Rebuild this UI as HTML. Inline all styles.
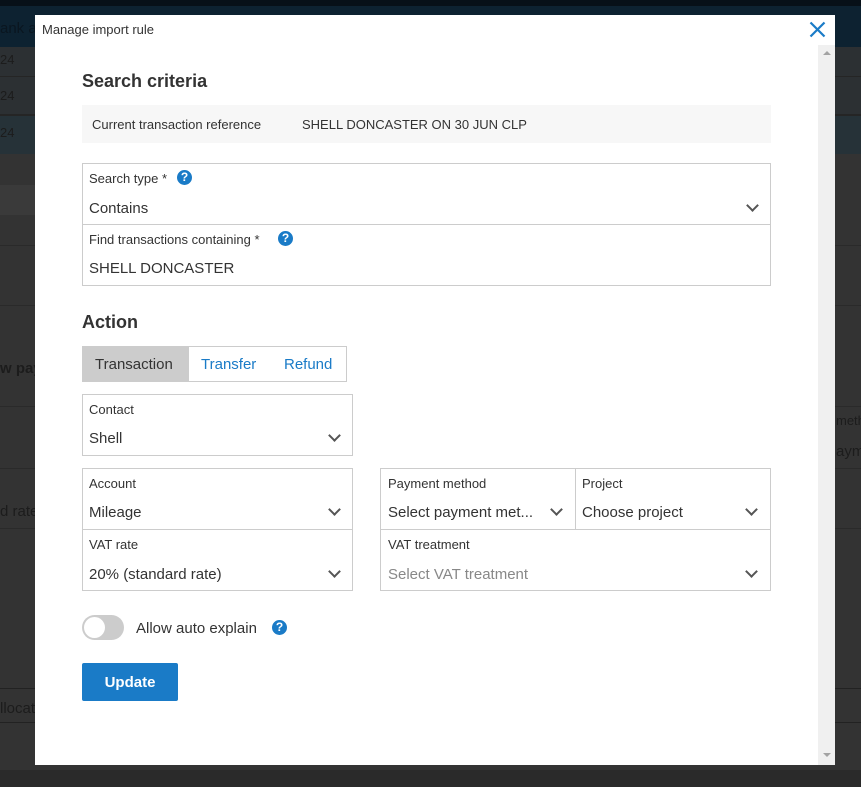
<!DOCTYPE html>
<html><head><meta charset="utf-8"><style>
*{margin:0;padding:0;box-sizing:border-box}
body{width:861px;height:787px;overflow:hidden;background:#333;font-family:"Liberation Sans",sans-serif;position:relative;color:#333}
.a{position:absolute}
.box{position:absolute;border:1px solid #ccc;background:#fff}
.lbl{position:absolute;font-size:13px;color:#333;margin-top:1px}
.val{position:absolute;font-size:15px;color:#333;margin-top:1px}
.chev{position:absolute;width:9px;height:9px;border-right:2px solid #555;border-bottom:2px solid #555;transform:rotate(45deg)}
.help{position:absolute;width:15px;height:15px;border-radius:50%;background:#1a7bc7;color:#fff;font-size:12px;font-weight:bold;text-align:center;line-height:15px}
.bgt{position:absolute;color:#1c1c1c;font-size:15px}
</style></head><body>
<div class="a" style="left:0;top:0;width:861px;height:6px;background:#071018"></div>
<div class="a" style="left:0;top:6px;width:861px;height:41px;background:#0d2231"></div>
<div class="a" style="left:0;top:47px;width:861px;height:107px;background:#2c3033"></div>
<div class="a" style="left:0;top:76px;width:861px;height:1px;background:#252525"></div>
<div class="a" style="left:0;top:114px;width:861px;height:2px;background:#252525"></div>
<div class="a" style="left:0;top:116px;width:861px;height:38px;background:#263238"></div>
<div class="a" style="left:0;top:185px;width:40px;height:30px;background:#3a3a3a"></div>
<div class="a" style="left:0;top:245px;width:861px;height:1px;background:#2a2a2a"></div>
<div class="a" style="left:0;top:305px;width:861px;height:1px;background:#2a2a2a"></div>
<div class="a" style="left:0;top:406px;width:861px;height:1px;background:#2a2a2a"></div>
<div class="a" style="left:0;top:468px;width:861px;height:1px;background:#2a2a2a"></div>
<div class="a" style="left:0;top:528px;width:861px;height:1px;background:#2a2a2a"></div>
<div class="a" style="left:0;top:688px;width:861px;height:1px;background:#222"></div>
<div class="a" style="left:0;top:722px;width:861px;height:1px;background:#222"></div>
<div class="a" style="left:0;top:770px;width:861px;height:17px;background:#2a2a2a"></div>
<div class="bgt" style="left:0;top:20px;color:#0a1620">ank a</div>
<div class="bgt" style="left:0;top:52px;font-size:13px">24</div>
<div class="bgt" style="left:0;top:88px;font-size:13px">24</div>
<div class="bgt" style="left:0;top:125px;font-size:13px">24</div>
<div class="bgt" style="left:0;top:360px;font-weight:bold">w pay</div>
<div class="bgt" style="left:0;top:503px">d rate</div>
<div class="bgt" style="left:0;top:700px">llocat</div>
<div class="bgt" style="left:836px;top:413px;font-size:13px">meth</div>
<div class="bgt" style="left:836px;top:443px">aym</div>

<div class="a" style="left:35px;top:15px;width:800px;height:750px;background:#fff"></div>
<div class="a" style="left:42px;top:22px;font-size:13px;color:#333">Manage import rule</div>
<svg class="a" style="left:809px;top:21px" width="17" height="17" viewBox="0 0 17 17"><path d="M1.5 1.5L15.5 15.5M15.5 1.5L1.5 15.5" stroke="#1a7bc7" stroke-width="2.2"/></svg>
<div class="a" style="left:818px;top:45px;width:17px;height:720px;background:#f0f0f0"></div>
<div class="a" style="left:823px;top:51px;border-left:4px solid transparent;border-right:4px solid transparent;border-bottom:4px solid #a3a3a3"></div>
<div class="a" style="left:823px;top:753px;border-left:4px solid transparent;border-right:4px solid transparent;border-top:4px solid #a3a3a3"></div>

<div class="a" style="left:82px;top:71px;font-size:18px;font-weight:bold;color:#333">Search criteria</div>
<div class="a" style="left:82px;top:105px;width:689px;height:38px;background:#f7f7f7"></div>
<div class="lbl" style="left:92px;top:116px">Current transaction reference</div>
<div class="lbl" style="left:302px;top:116px">SHELL DONCASTER ON 30 JUN CLP</div>

<div class="box" style="left:82px;top:163px;width:689px;height:123px"></div>
<div class="a" style="left:83px;top:224px;width:687px;height:1px;background:#ccc"></div>
<div class="lbl" style="left:89px;top:170px">Search type *</div>
<div class="help" style="left:177px;top:170px">?</div>
<div class="val" style="left:89px;top:199px">Contains</div>
<div class="chev" style="left:748px;top:201px"></div>
<div class="lbl" style="left:89px;top:231px">Find transactions containing *</div>
<div class="help" style="left:278px;top:231px">?</div>
<div class="val" style="left:89px;top:259px">SHELL DONCASTER</div>

<div class="a" style="left:82px;top:312px;font-size:18px;font-weight:bold;color:#333">Action</div>
<div class="box" style="left:82px;top:346px;width:265px;height:36px"></div>
<div class="a" style="left:83px;top:347px;width:106px;height:34px;background:#ccc"></div>
<div class="val" style="left:95px;top:355px">Transaction</div>
<div class="val" style="left:201px;top:355px;color:#1a7bc7">Transfer</div>
<div class="val" style="left:284px;top:355px;color:#1a7bc7">Refund</div>

<div class="box" style="left:82px;top:394px;width:271px;height:62px"></div>
<div class="lbl" style="left:89px;top:401px">Contact</div>
<div class="val" style="left:89px;top:429px">Shell</div>
<div class="chev" style="left:330px;top:431px"></div>

<div class="box" style="left:82px;top:468px;width:271px;height:123px"></div>
<div class="a" style="left:83px;top:529px;width:269px;height:1px;background:#ccc"></div>
<div class="lbl" style="left:89px;top:475px">Account</div>
<div class="val" style="left:89px;top:503px">Mileage</div>
<div class="chev" style="left:330px;top:505px"></div>
<div class="lbl" style="left:89px;top:536px">VAT rate</div>
<div class="val" style="left:89px;top:565px">20% (standard rate)</div>
<div class="chev" style="left:330px;top:567px"></div>

<div class="box" style="left:380px;top:468px;width:391px;height:123px"></div>
<div class="a" style="left:381px;top:529px;width:389px;height:1px;background:#ccc"></div>
<div class="a" style="left:575px;top:469px;width:1px;height:60px;background:#ccc"></div>
<div class="lbl" style="left:388px;top:475px">Payment method</div>
<div class="val" style="left:388px;top:503px">Select payment met...</div>
<div class="chev" style="left:552px;top:505px"></div>
<div class="lbl" style="left:582px;top:475px">Project</div>
<div class="val" style="left:582px;top:503px">Choose project</div>
<div class="chev" style="left:747px;top:505px"></div>
<div class="lbl" style="left:388px;top:536px">VAT treatment</div>
<div class="val" style="left:388px;top:565px;color:#888">Select VAT treatment</div>
<div class="chev" style="left:747px;top:567px"></div>

<div class="a" style="left:82px;top:615px;width:42px;height:25px;border-radius:13px;background:#ccc"></div>
<div class="a" style="left:84px;top:617px;width:21px;height:21px;border-radius:50%;background:#fff"></div>
<div class="val" style="left:136px;top:619px">Allow auto explain</div>
<div class="help" style="left:272px;top:620px">?</div>

<div class="a" style="left:82px;top:663px;width:96px;height:38px;background:#1a7bc7;border-radius:2px;color:#fff;font-size:15px;font-weight:bold;text-align:center;line-height:39px">Update</div>
</body></html>
